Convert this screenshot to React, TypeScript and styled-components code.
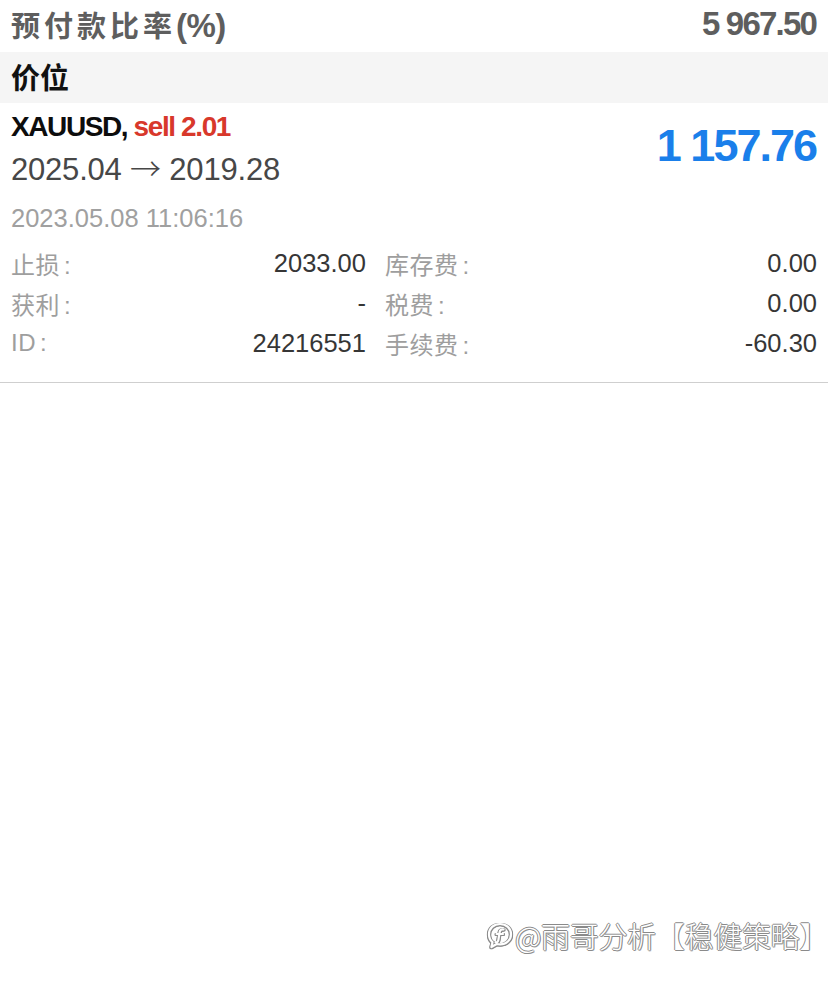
import styled, { createGlobalStyle } from 'styled-components';

const GlobalStyle = createGlobalStyle`
  html, body {
    margin: 0;
    padding: 0;
    background: #ffffff;
  }

  body {
    font-family: 'Liberation Sans', Arial, 'Noto Sans CJK SC', sans-serif;
    -webkit-font-smoothing: antialiased;
  }
`;

type DetailType = {
  label: string;
  value: string;
};

const leftDetails: DetailType[] = [
  { label: '止损', value: '2033.00' },
  { label: '获利', value: '-' },
  { label: 'ID', value: '24216551' },
];

const rightDetails: DetailType[] = [
  { label: '库存费', value: '0.00' },
  { label: '税费', value: '0.00' },
  { label: '手续费', value: '-60.30' },
];

const DetailPair = (props: DetailType) => {
  return (
    <Pair>
      <PairLabel>
        {props.label}
        <Colon>:</Colon>
      </PairLabel>
      <PairValue>{props.value}</PairValue>
    </Pair>
  );
};

const ZhihuMark = () => (
  <svg width="30" height="30" viewBox="0 0 30 30" fill="none">
    <path
      d="M15 4c6.3 0 11 4.4 11 10.2S21.3 24.4 15 24.4c-1.2 0-2.3-.1-3.3-.4L6.4 27l1.1-4.8C5.3 20.4 4 17.5 4 14.2 4 8.4 8.7 4 15 4z"
      stroke="#ffffff"
      strokeWidth="2.2"
      strokeLinejoin="round"
    />
    <path
      d="M18.5 9.5c-2.2-.6-3.6.6-3.9 2.8l-1.2 7.6c-.3 1.8-1.3 2.6-2.9 2.3M11.6 14h6.4"
      stroke="#ffffff"
      strokeWidth="2.2"
      strokeLinecap="round"
    />
  </svg>
);

export default function App() {
  const leftCol = leftDetails.map((d) => <DetailPair key={d.label} {...d} />);
  const rightCol = rightDetails.map((d) => <DetailPair key={d.label} {...d} />);

  return (
    <Page>
      <GlobalStyle />
      <TopRow>
        <TopLabel>
          <CjkSpaced>预付款比率</CjkSpaced>(%)
        </TopLabel>
        <TopValue>5 967.50</TopValue>
      </TopRow>

      <SectionHeader>价位</SectionHeader>

      <Position>
        <PositionHead>
          <FlexColumn>
            <SymbolLine>
              XAUUSD, <SideText>sell 2.01</SideText>
            </SymbolLine>
            <PriceLine>
              2025.04 <Arrow>→</Arrow> 2019.28
            </PriceLine>
          </FlexColumn>
          <Profit>1 157.76</Profit>
        </PositionHead>

        <OpenTime>2023.05.08 11:06:16</OpenTime>

        <DetailGrid>
          {leftCol.map((item, i) => [item, rightCol[i]])}
        </DetailGrid>
      </Position>

      <Watermark>
        <ZhihuMark />
        <span>@雨哥分析【稳健策略】</span>
      </Watermark>
    </Page>
  );
}

const Page = styled.div`
  position: relative;
  width: 828px;
  height: 984px;
  background: #ffffff;
  overflow: hidden;
`;

const TopRow = styled.div`
  display: flex;
  align-items: center;
  justify-content: space-between;
  height: 47px;
  padding: 0 11px;
  color: #5e5e5e;
`;

const TopLabel = styled.span`
  font-size: 33px;
  font-weight: 700;
  letter-spacing: -0.5px;
`;

const CjkSpaced = styled.span`
  font-family: 'Noto Sans CJK SC', sans-serif;
  font-size: 29px;
  font-weight: 700;
  letter-spacing: 4px;
`;

const TopValue = styled.span`
  font-size: 33px;
  font-weight: 700;
  letter-spacing: -1.8px;
  margin-right: 1px;
`;

const SectionHeader = styled.div`
  display: flex;
  align-items: center;
  height: 51px;
  margin-top: 5px;
  padding: 0 11px 3px;
  box-sizing: border-box;
  background: #f5f5f5;
  color: #111111;
  font-family: 'Noto Sans CJK SC', sans-serif;
  font-size: 29px;
  font-weight: 700;
`;

const Position = styled.div`
  display: flex;
  flex-direction: column;
  padding: 3px 11px 19px;
  border-bottom: 1px solid #cfcfcf;
`;

const PositionHead = styled.div`
  display: flex;
  align-items: center;
  justify-content: space-between;
`;

const FlexColumn = styled.div`
  display: flex;
  flex-direction: column;
`;

const SymbolLine = styled.div`
  height: 42px;
  line-height: 42px;
  color: #0d0d0d;
  font-size: 28px;
  font-weight: 700;
  letter-spacing: -1.4px;
`;

const SideText = styled.span`
  color: #d8382b;
`;

const PriceLine = styled.div`
  height: 38px;
  line-height: 38px;
  color: #474747;
  font-size: 31px;
  letter-spacing: -0.2px;
`;

const Arrow = styled.span`
  font-family: 'Noto Sans CJK SC', sans-serif;
  font-weight: 300;
`;

const Profit = styled.span`
  color: #1a7fea;
  font-size: 45px;
  font-weight: 700;
  letter-spacing: -2px;
  margin-right: 1px;
`;

const OpenTime = styled.div`
  height: 36px;
  line-height: 36px;
  margin-top: 14px;
  color: #a0a0a0;
  font-size: 25.5px;
`;

const DetailGrid = styled.div`
  display: grid;
  grid-template-columns: 355px 1fr;
  column-gap: 19px;
  margin-top: 7px;
`;

const Pair = styled.div`
  display: flex;
  align-items: center;
  justify-content: space-between;
  height: 40px;
`;

const PairLabel = styled.span`
  color: #9e9e9e;
  font-family: 'Liberation Sans', 'Noto Sans CJK SC', sans-serif;
  font-size: 24px;
  letter-spacing: 0.5px;
`;

const Colon = styled.span`
  margin-left: 4px;
`;

const PairValue = styled.span`
  color: #363636;
  font-size: 25.5px;
`;

const Watermark = styled.div`
  position: absolute;
  right: 0;
  top: 914px;
  display: flex;
  align-items: center;
  color: #ffffff;
  font-family: 'Noto Sans CJK SC', sans-serif;
  font-size: 29px;
  font-weight: 300;
  letter-spacing: -0.3px;
  white-space: nowrap;
  text-shadow: -1px 0 #8a8a8a, 1px 0 #8a8a8a, 0 1px #8a8a8a, 0 -1px #8a8a8a, 1px 1px #b0b0b0;

  svg {
    filter: drop-shadow(1px 0 0 #8a8a8a) drop-shadow(-1px 0 0 #8a8a8a) drop-shadow(0 1px 0 #8a8a8a);
  }
`;
